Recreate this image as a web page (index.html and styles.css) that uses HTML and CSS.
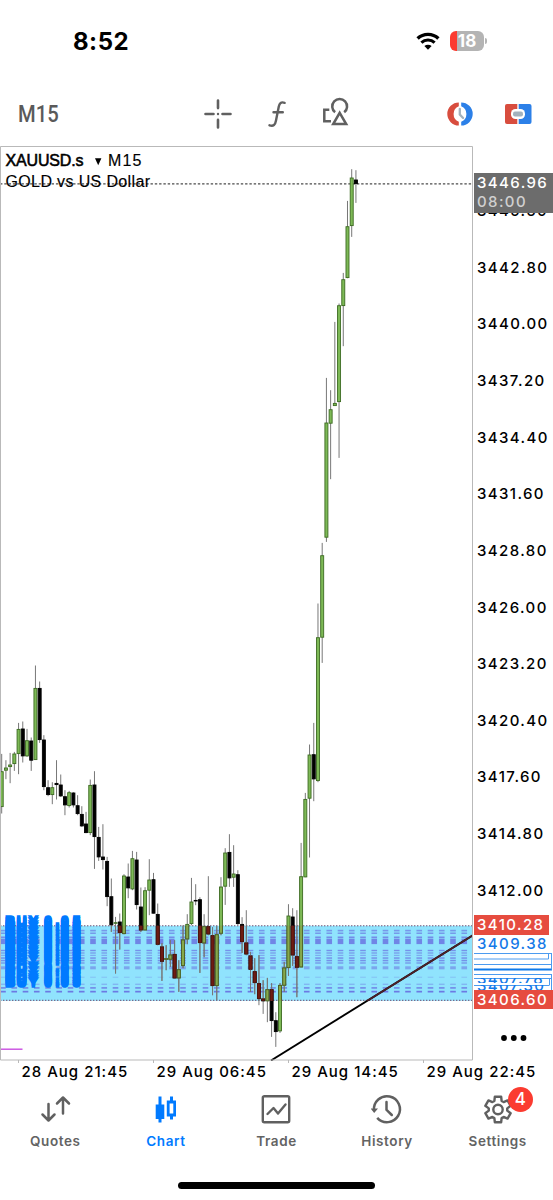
FILE: index.html
```html
<!DOCTYPE html>
<html lang="en">
<head>
  <meta charset="UTF-8">
  <meta name="viewport" content="width=device-width, initial-scale=1.0">
  <title>XAUUSD.s M15</title>
  <link rel="stylesheet" href="styles.css">
</head>
<body>
  <div class="app">
    <header class="status">
      <div class="clock">8:52</div>
      <div class="status-icons">
        <svg width="24" height="18" viewBox="0 0 24 18">
          <path d="M1.600 6.600a15 15 0 0 1 20.800 0" fill="none" stroke="#000" stroke-width="3.400"/>
          <path d="M5.400 10.700a9.600 9.600 0 0 1 13.200 0" fill="none" stroke="#000" stroke-width="3.100"/>
          <path d="M12 17.800l-3.600-3.700a5.200 5.200 0 0 1 7.200 0z"/>
        </svg>
        <div class="battery">18</div>
      </div>
    </header>

    <div class="toolbar">
      <div class="timeframe">M15</div>
      <div class="tools">
        <svg width="28" height="30" viewBox="0 0 28 30" fill="none" stroke="#606060" stroke-width="2.600" stroke-linecap="round">
          <path d="M14 1.500v7.600M14 20.900v7.600M1.500 15h8M18.500 15h8"/>
          <path d="M14 15h.01" stroke-width="2.400"/>
        </svg>
        <svg width="18" height="28" viewBox="0 0 18 28" fill="none" stroke="#606060" stroke-width="2.400" stroke-linecap="round">
          <path d="M16.600 2.800C13 1.700 11.500 3 10.800 6.500L8 20.500C7.200 25 5.500 26.500 1.500 25.300M5.500 12.300h9.300"/>
        </svg>
        <svg width="28" height="30" viewBox="0 0 28 30" fill="none" stroke="#606060" stroke-width="2.500">
          <path d="M7.300 12.700H2.300V24.200H9"/>
          <path d="M13.100 15.300a7.400 7.400 0 1 1 9.100 0"/>
          <path d="M17.700 15.800L24.200 27H11.200z"/>
        </svg>
      </div>
      <div class="actions">
        <svg width="28" height="26" viewBox="0 0 28 26">
          <path d="M12.800 1.500A11.500 11.500 0 0 0 12.800 24.500V20.700A8.300 8.300 0 0 1 12.800 5.300z" fill="#d84d3e"/>
          <path d="M15.200 1.500A11.500 11.500 0 0 1 15.200 24.500V20.700A8.300 8.300 0 0 0 15.200 5.300z" fill="#2c80e8"/>
          <path d="M13.800 8v5.500l3.300 3.500" fill="none" stroke="#a3b2bd" stroke-width="2.300" stroke-linecap="round"/>
        </svg>
        <svg width="28" height="22" viewBox="0 0 28 22">
          <path d="M3 1H13.300V21H3A2 2 0 0 1 1 19V3A2 2 0 0 1 3 1z" fill="#d84d3e"/>
          <path d="M14.700 1H25.500A2 2 0 0 1 27.500 3V19A2 2 0 0 1 25.500 21H14.700z" fill="#2c80e8"/>
          <rect x="7" y="6" width="14" height="10" rx="4.500" fill="#fff"/>
          <rect x="9" y="8.500" width="10" height="5" rx="2" fill="#a3b2bd"/>
        </svg>
      </div>
    </div>

    <main class="chart">
      <svg class="plot" width="473" height="915" viewBox="0 145.500 473 915">
        <defs>
          <clipPath id="zone"><rect x="0" y="925.300" width="472" height="75"/></clipPath>
        </defs>
        <rect class="zone" x="0" y="925.300" width="472" height="75"/>
        <g id="levels"></g>
        <path class="zone-line" d="M0 925.300H472M0 999.800H472"/>
        <path class="price-line" d="M0 183.300H472"/>
        <g id="candles"></g>
        <g id="candles-zone" clip-path="url(#zone)"></g>
        <path class="trend" d="M271 1060L472.500 935"/>
        <path class="trend trend-zone" d="M271 1060L472.500 935" clip-path="url(#zone)"/>
        <g id="orders"></g>
        <path class="magenta" d="M0 1048.700H22.500"/>
        <path class="frame" d="M.5 1059.500V146H472.500V1059.500z"/>
        <text class="symbol" x="5.500" y="165.400" textLength="78">XAUUSD.s</text>
        <path d="M95 157.700h6.400l-3.200 7z"/>
        <text class="title" x="108" y="165.400" textLength="33.500">M15</text>
        <text class="title" x="5.500" y="186.400" textLength="144.500">GOLD vs US Dollar</text>
      </svg>

      <div class="price-axis">
        <div>3445.60</div>
        <div>3442.80</div>
        <div>3440.00</div>
        <div>3437.20</div>
        <div>3434.40</div>
        <div>3431.60</div>
        <div>3428.80</div>
        <div>3426.00</div>
        <div>3423.20</div>
        <div>3420.40</div>
        <div>3417.60</div>
        <div>3414.80</div>
        <div>3412.00</div>
        <div class="tag current">3446.96<br><span>08:00</span></div>
        <div class="tag order order-top">3409.38</div>
        <svg class="order-stack" width="80" height="60" viewBox="473 932 80 60" fill="none" stroke="#4b9bf0">
          <path d="M474 953.500H552M474 959H548.500M474 964.500H552M474 974.500H552M474 978.500H552M474 985.500H549"/>
          <path d="M474 969.500H552" stroke="#0f7bea" stroke-width="2"/>
          <path d="M548.500 953.500V959M551.500 953.500V969.500M549.500 978.500V985.500M551.500 974.500V991"/>
        </svg>
        <div class="tag cut cut-one"><span>3407.78</span></div>
        <div class="tag cut cut-two"><span>3407.30</span></div>
        <div class="tag stop stop-top">3410.28</div>
        <div class="tag stop stop-bottom">3406.60</div>
        <svg class="more" width="28" height="8" viewBox="0 0 28 8">
          <circle cx="4" cy="4" r="2.900"/><circle cx="13.800" cy="4" r="2.900"/><circle cx="23.500" cy="4" r="2.900"/>
        </svg>
      </div>
    </main>

    <div class="time-axis">
      <div>28 Aug 21:45</div>
      <div>29 Aug 06:45</div>
      <div>29 Aug 14:45</div>
      <div>29 Aug 22:45</div>
    </div>

    <nav class="tabs">
      <div class="tab">
        <svg width="32" height="32" viewBox="0 0 32 32" fill="none" stroke="#606060" stroke-width="2.500" stroke-linecap="round" stroke-linejoin="round">
          <path d="M9.500 11v16M3.500 21.500l6 6 6-6M24 20.500v-16M18 10.500l6-6 6 6"/>
        </svg>
        <span>Quotes</span>
      </div>
      <div class="tab active">
        <svg width="32" height="32" viewBox="0 0 32 32" fill="#007aff">
          <path d="M8.500 3.500h3v8h2.800v14.500h-2.800v3.500h-3V26H5.700V11.500h2.800zM20 3.500h3V7.500h3V23.500h-3v3h-3v-3h-3.200V7.500H20zM19.600 10.500v10h3.700v-10z" fill-rule="evenodd"/>
        </svg>
        <span>Chart</span>
      </div>
      <div class="tab">
        <svg width="32" height="32" viewBox="0 0 32 32" fill="none" stroke="#606060" stroke-width="2.400" stroke-linecap="round" stroke-linejoin="round">
          <rect x="2.800" y="3.200" width="26.400" height="26" rx="1.500"/>
          <path d="M7.500 21l6-6 4.500 5.500 7.500-9"/>
        </svg>
        <span>Trade</span>
      </div>
      <div class="tab">
        <svg width="32" height="32" viewBox="2 0 32 32" fill="none" stroke="#606060" stroke-width="2.500">
          <path d="M5 17.500a13 13 0 1 1 3.200 7.300"/>
          <path d="M17.500 9v7.800l5.300 5.200" stroke-linecap="round"/>
          <path d="M1.500 15.500h7.500l-3.800 4.500z" fill="#606060" stroke="none"/>
        </svg>
        <span>History</span>
      </div>
      <div class="tab">
        <svg width="32" height="32" viewBox="0 0 32 32" fill="none" stroke="#606060" stroke-width="2.400" stroke-linejoin="round">
          <path id="gear"/>
          <circle cx="16" cy="16.500" r="4.700"/>
        </svg>
        <span>Settings</span>
        <div class="count">4</div>
      </div>
    </nav>
    <div class="home-bar"></div>
  </div>

<script>
// type, body top, body bottom, wick top, wick bottom
var candles = [
  ['g', 771, 806.7, 753.7, 813.3], ['g', 767.3, 770.3, 760, 779], ['g', 764.3, 766.7, 752.7, 783],
  ['g', 753.3, 763.7, 751.7, 770.7], ['g', 728.7, 753.7, 722.7, 774], ['b', 728.3, 756, 721.3, 762.3],
  ['g', 740, 756, 728.7, 756.7], ['b', 740.3, 760.3, 737.3, 770.7], ['g', 687.7, 759.7, 665.3, 759.7],
  ['b', 687.7, 739.7, 681.3, 742.7], ['b', 739.3, 786.7, 735, 790], ['b', 787, 794.7, 780, 796],
  ['g', 787, 794.7, 782, 804], ['b', 782.7, 784.7, 760, 799.3], ['b', 784.3, 796, 774.3, 796.7],
  ['b', 796, 805, 790, 815], ['g', 792, 805.7, 790.7, 807.3], ['b', 792.3, 805, 792, 807.3],
  ['b', 805, 813.7, 795, 815], ['b', 813.7, 826, 806, 826.7], ['b', 823.3, 832.7, 811.7, 833],
  ['g', 784.7, 832.7, 779.3, 835], ['b', 784.3, 836.7, 771, 868.7], ['b', 836.7, 857, 826.7, 860.7],
  ['b', 856.3, 859.7, 824, 869.3], ['b', 860.7, 896.7, 856.7, 906], ['b', 896, 925, 878.3, 931.7],
  ['g', 922, 923.3, 916.7, 973.3], ['b', 921.3, 932.7, 913.3, 949.3], ['g', 875.3, 933.7, 874, 934],
  ['b', 876.3, 888, 863.3, 898], ['g', 858, 889, 850.7, 890], ['b', 859.3, 904.7, 851.7, 909.3],
  ['b', 906.3, 930, 887.3, 931.7], ['g', 890, 930, 887, 930], ['g', 879.3, 890.3, 859, 915],
  ['b', 879, 913.3, 872.7, 913.3], ['b', 913.7, 944.3, 903.3, 945], ['b', 946.3, 961.3, 943, 980.7],
  ['g', 958, 959.3, 945, 970], ['g', 954.3, 959.3, 940, 966.7], ['b', 953.7, 978, 940, 978],
  ['g', 969, 978, 960, 991.7], ['g', 939.3, 965.7, 925, 968], ['g', 923.7, 939, 914, 944],
  ['g', 901.3, 923.7, 877.7, 925], ['b', 899.7, 901, 884, 905], ['b', 899, 942.7, 897, 972.7],
  ['g', 926, 943, 914, 957], ['b', 926, 934, 876, 935], ['b', 935, 985.7, 927, 995],
  ['g', 934, 985.7, 926, 1000], ['g', 886.3, 933.3, 877, 935], ['g', 852.3, 886.3, 848, 904.7],
  ['b', 851.7, 878, 834, 886.7], ['g', 873.3, 877.3, 845, 886.7], ['b', 874, 923.7, 870, 925],
  ['b', 923.7, 941.7, 917, 952.7], ['b', 942.3, 954, 910, 955], ['b', 955.3, 969.3, 951.7, 991.7],
  ['b', 971, 982.7, 958, 994], ['b', 983, 998.7, 955, 1005], ['b', 998.3, 1001, 980, 1013.7],
  ['g', 989, 1001, 977.7, 1022], ['b', 989, 1020.7, 983, 1036.7], ['b', 1020, 1031.7, 1012, 1046.7],
  ['g', 984.7, 1031, 983, 1032.7], ['g', 967.3, 985.3, 961.7, 991.7], ['g', 915.3, 967.7, 904, 975.7],
  ['b', 916.3, 955, 908, 965.7], ['b', 956, 967.3, 910, 997], ['g', 876, 967, 842.7, 967],
  ['g', 798.7, 877, 792.7, 877], ['g', 754.3, 798.3, 744.3, 857.3], ['b', 754, 779, 722.7, 801],
  ['g', 637, 780.7, 603.3, 782], ['g', 555, 637.3, 542.7, 662.7], ['g', 422.3, 537.3, 377.7, 541.7],
  ['g', 409, 423.3, 390, 479], ['g', 402.7, 405.7, 321.7, 405], ['g', 305, 401.7, 303.3, 457.7],
  ['g', 279, 305.7, 272.7, 346], ['g', 226, 277.7, 200.7, 278], ['g', 177.3, 225.7, 169, 236.7],
  ['b', 179.3, 183.7, 170, 202.7]
];

var html = '';
candles.forEach(function (c, i) {
  var x = 1.7 + i * 4.217;
  var top = c[1] + 0.2;
  var height = Math.max(c[2] - c[1] - 0.8, 0.6);
  html += '<path class="wick" d="M' + x.toFixed(2) + ' ' + (c[3] - 0.3) + 'V' + (c[4] - 0.3) + '"/>';
  html += '<rect class="' + (c[0] === 'g' ? 'up' : 'down') + '" x="' + (x - 1.5).toFixed(2) +
    '" y="' + top.toFixed(1) + '" width="3" height="' + height.toFixed(1) + '"/>';
});
document.getElementById('candles').innerHTML = html;
document.getElementById('candles-zone').innerHTML = html;

// dashed order levels: y, height, opacity
var levels = [
  [929.3, 1.6, 0.6], [932, 1.5, 0.6], [936, 1.6, 0.7], [938.2, 5.4, 0.75], [949.3, 1.4, 0.65],
  [951.8, 1.4, 0.55], [954.3, 1.2, 0.45], [956.8, 1.5, 0.65], [959.3, 1.5, 0.65], [961.8, 1.4, 0.6],
  [965.8, 3, 0.5], [976.3, 0.7, 0.4], [983.2, 1.1, 0.45], [986.5, 1.8, 0.65], [990.3, 1.7, 0.85]
];
html = '';
for (var col = 0; col < 42; col++) {
  levels.forEach(function (l) {
    html += '<rect x="' + (col * 11.25 + 0.2) + '" y="' + l[0] + '" width="5.6" height="' + l[1] +
      '" opacity="' + l[2] + '"/>';
  });
}
document.getElementById('levels').innerHTML = html;

// order captions overlap one another
html = '';
[924.5, 926.5, 929, 931.5, 934, 936.5, 939, 941.5, 944, 946.5, 949, 951.5, 954, 956.5, 959, 961.5, 964, 970, 972.5, 975, 979.5, 982, 984.5, 986.5].forEach(function (y) {
  html += '<text x="5.200 16.800 28.700 40 44.200 55.600 61 72.800" y="' + y + '">BUY 0.05</text>';
});
document.getElementById('orders').innerHTML = html;

// settings gear outline
var d = '';
for (var k = 0; k < 6; k++) {
  [[-0.4, 9.3], [-0.24, 13.2], [0.24, 13.2], [0.4, 9.3]].forEach(function (p) {
    var a = k * Math.PI / 3 + p[0];
    d += (d ? 'L' : 'M') + (16 + p[1] * Math.sin(a)).toFixed(2) + ' ' + (16.5 - p[1] * Math.cos(a)).toFixed(2);
  });
}
document.getElementById('gear').setAttribute('d', d + 'z');
</script>
</body>
</html>
```
FILE: styles.css
```css
body {
  margin: 0;
  background-color: #fff;
  font-family: Inter, sans-serif;
  color: #000;
}

.app {
  width: 553px;
  height: 1200px;
  overflow: hidden;
}

.status {
  box-sizing: border-box;
  height: 82px;
  padding: 0 66px 0 73px;
  display: flex;
  align-items: center;
  justify-content: space-between;
}

.clock {
  font-size: 24px;
  font-weight: 700;
  letter-spacing: 0.500px;
}

.status-icons {
  display: flex;
  align-items: center;
  gap: 10px;
}

.battery {
  position: relative;
  width: 34px;
  height: 20px;
  margin-right: 3px;
  border-radius: 6px;
  background: linear-gradient(to right, #fb3b30 6.500px, #b4b4b4 6.500px);
  color: #fff;
  font-size: 17px;
  font-weight: 700;
  line-height: 20px;
  text-align: center;
}

.battery::after {
  content: "";
  position: absolute;
  right: -3px;
  top: 7px;
  width: 2px;
  height: 6px;
  border-radius: 0 2px 2px 0;
  background-color: #b4b4b4;
}

.toolbar {
  box-sizing: border-box;
  height: 63.500px;
  padding: 0 21.500px 0 18px;
  display: flex;
  align-items: center;
}

.timeframe {
  width: 186px;
  font-family: Roboto, sans-serif;
  font-size: 23.500px;
  font-weight: 500;
  color: #5a5a5a;
  transform: scaleX(0.86);
  transform-origin: left;
}

.tools {
  display: flex;
  align-items: center;
  gap: 36px;
}

.tools svg:last-child {
  margin-top: -3px;
}

.actions {
  display: flex;
  align-items: center;
  gap: 30px;
  margin-left: auto;
}

.chart {
  display: flex;
  height: 914.500px;
}

.plot {
  flex: none;
}

.frame {
  fill: none;
  stroke: #b9b9b9;
}

.zone {
  fill: #90e3fd;
}

.zone-line {
  stroke: #704a70;
  stroke-dasharray: 1.400 1.600;
}

.price-line {
  stroke: #4c4c4c;
  stroke-width: 1.200;
  stroke-dasharray: 2.400 1.900;
}

#levels {
  fill: #6667de;
}

.wick {
  stroke: #777;
}

.up {
  fill: #7db956;
  stroke: #3d6b22;
  stroke-width: 0.900;
}

.down {
  fill: #000;
  stroke: #000;
  stroke-width: 0.900;
}

#candles-zone .up {
  fill: #86a94c;
  stroke: #4d602a;
}

#candles-zone .down {
  fill: #6e1c13;
  stroke: #51150f;
}

.trend {
  stroke: #000;
  stroke-width: 1.900;
}

.trend-zone {
  stroke: #4a2028;
}

.magenta {
  stroke: #c94de0;
  stroke-width: 1.400;
}

#orders {
  fill: #007aff;
  stroke: #007aff;
  stroke-width: 1.600;
  font-family: "Liberation Sans", Arial, sans-serif;
  font-size: 13.500px;
  font-weight: 700;
}

.symbol,
.title {
  font-family: "Liberation Sans", Arial, sans-serif;
  font-size: 16px;
  stroke: #000;
  stroke-width: 0.150;
}

.symbol {
  stroke-width: 0.550;
}

.price-axis {
  position: relative;
  width: 80px;
  padding-top: 37.700px;
  box-sizing: border-box;
  font-size: 15px;
  font-weight: 500;
  letter-spacing: 1.400px;
}

.price-axis > div:not(.tag) {
  height: 56.640px;
  padding-left: 4px;
  line-height: 56.640px;
}

.tag {
  position: absolute;
  left: 1px;
  box-sizing: border-box;
  width: 79px;
  padding-left: 3px;
  height: 19px;
  line-height: 19px;
}

.current {
  top: 27.500px;
  height: 39.500px;
  background-color: #6c6c6c;
  color: #fff;
}

.current span {
  color: #d0d0d0;
}

.stop {
  background-color: #e64c3f;
  color: #fff;
}

.stop-top {
  top: 769px;
  width: 75px;
  height: 20px;
  line-height: 20px;
}

.stop-bottom {
  top: 844.500px;
}

.order,
.cut {
  color: #1479e8;
}

.order-top {
  top: 788.500px;
}

.cut {
  height: 5px;
  overflow: hidden;
}

.cut span {
  display: block;
  margin-top: -9px;
}

.cut-one {
  top: 832.500px;
}

.cut-two {
  top: 839.500px;
}

.order-stack {
  position: absolute;
  left: 0;
  top: 786.500px;
}

.more {
  position: absolute;
  left: 27px;
  top: 888.500px;
}

.time-axis {
  display: flex;
  height: 24px;
  padding-left: 17.500px;
  font-size: 15px;
  font-weight: 500;
  letter-spacing: 1px;
  line-height: 23px;
  white-space: nowrap;
}

.time-axis div {
  position: relative;
  flex: none;
  width: 131px;
  padding-left: 4px;
}

.time-axis div::before {
  content: "";
  position: absolute;
  left: 0;
  top: 0;
  width: 1px;
  height: 3px;
  background-color: #b9b9b9;
}

.tabs {
  display: grid;
  grid-template-columns: repeat(5, 1fr);
  height: 98px;
  padding-top: 9px;
  box-sizing: border-box;
}

.tab {
  position: relative;
  display: flex;
  flex-direction: column;
  align-items: center;
  gap: 8px;
  color: #636363;
  font-size: 13.500px;
  font-weight: 600;
  letter-spacing: 0.600px;
  line-height: 17px;
}

.active {
  color: #007aff;
}

.count {
  position: absolute;
  left: 65.500px;
  top: -6px;
  width: 25px;
  height: 25px;
  border-radius: 50%;
  background-color: #fb3b30;
  color: #fff;
  font-size: 17px;
  font-weight: 500;
  letter-spacing: 0;
  line-height: 25px;
  text-align: center;
}

.home-bar {
  width: 197px;
  height: 6.500px;
  margin: 0 auto;
  border-radius: 4px;
  background-color: #000;
}
```
